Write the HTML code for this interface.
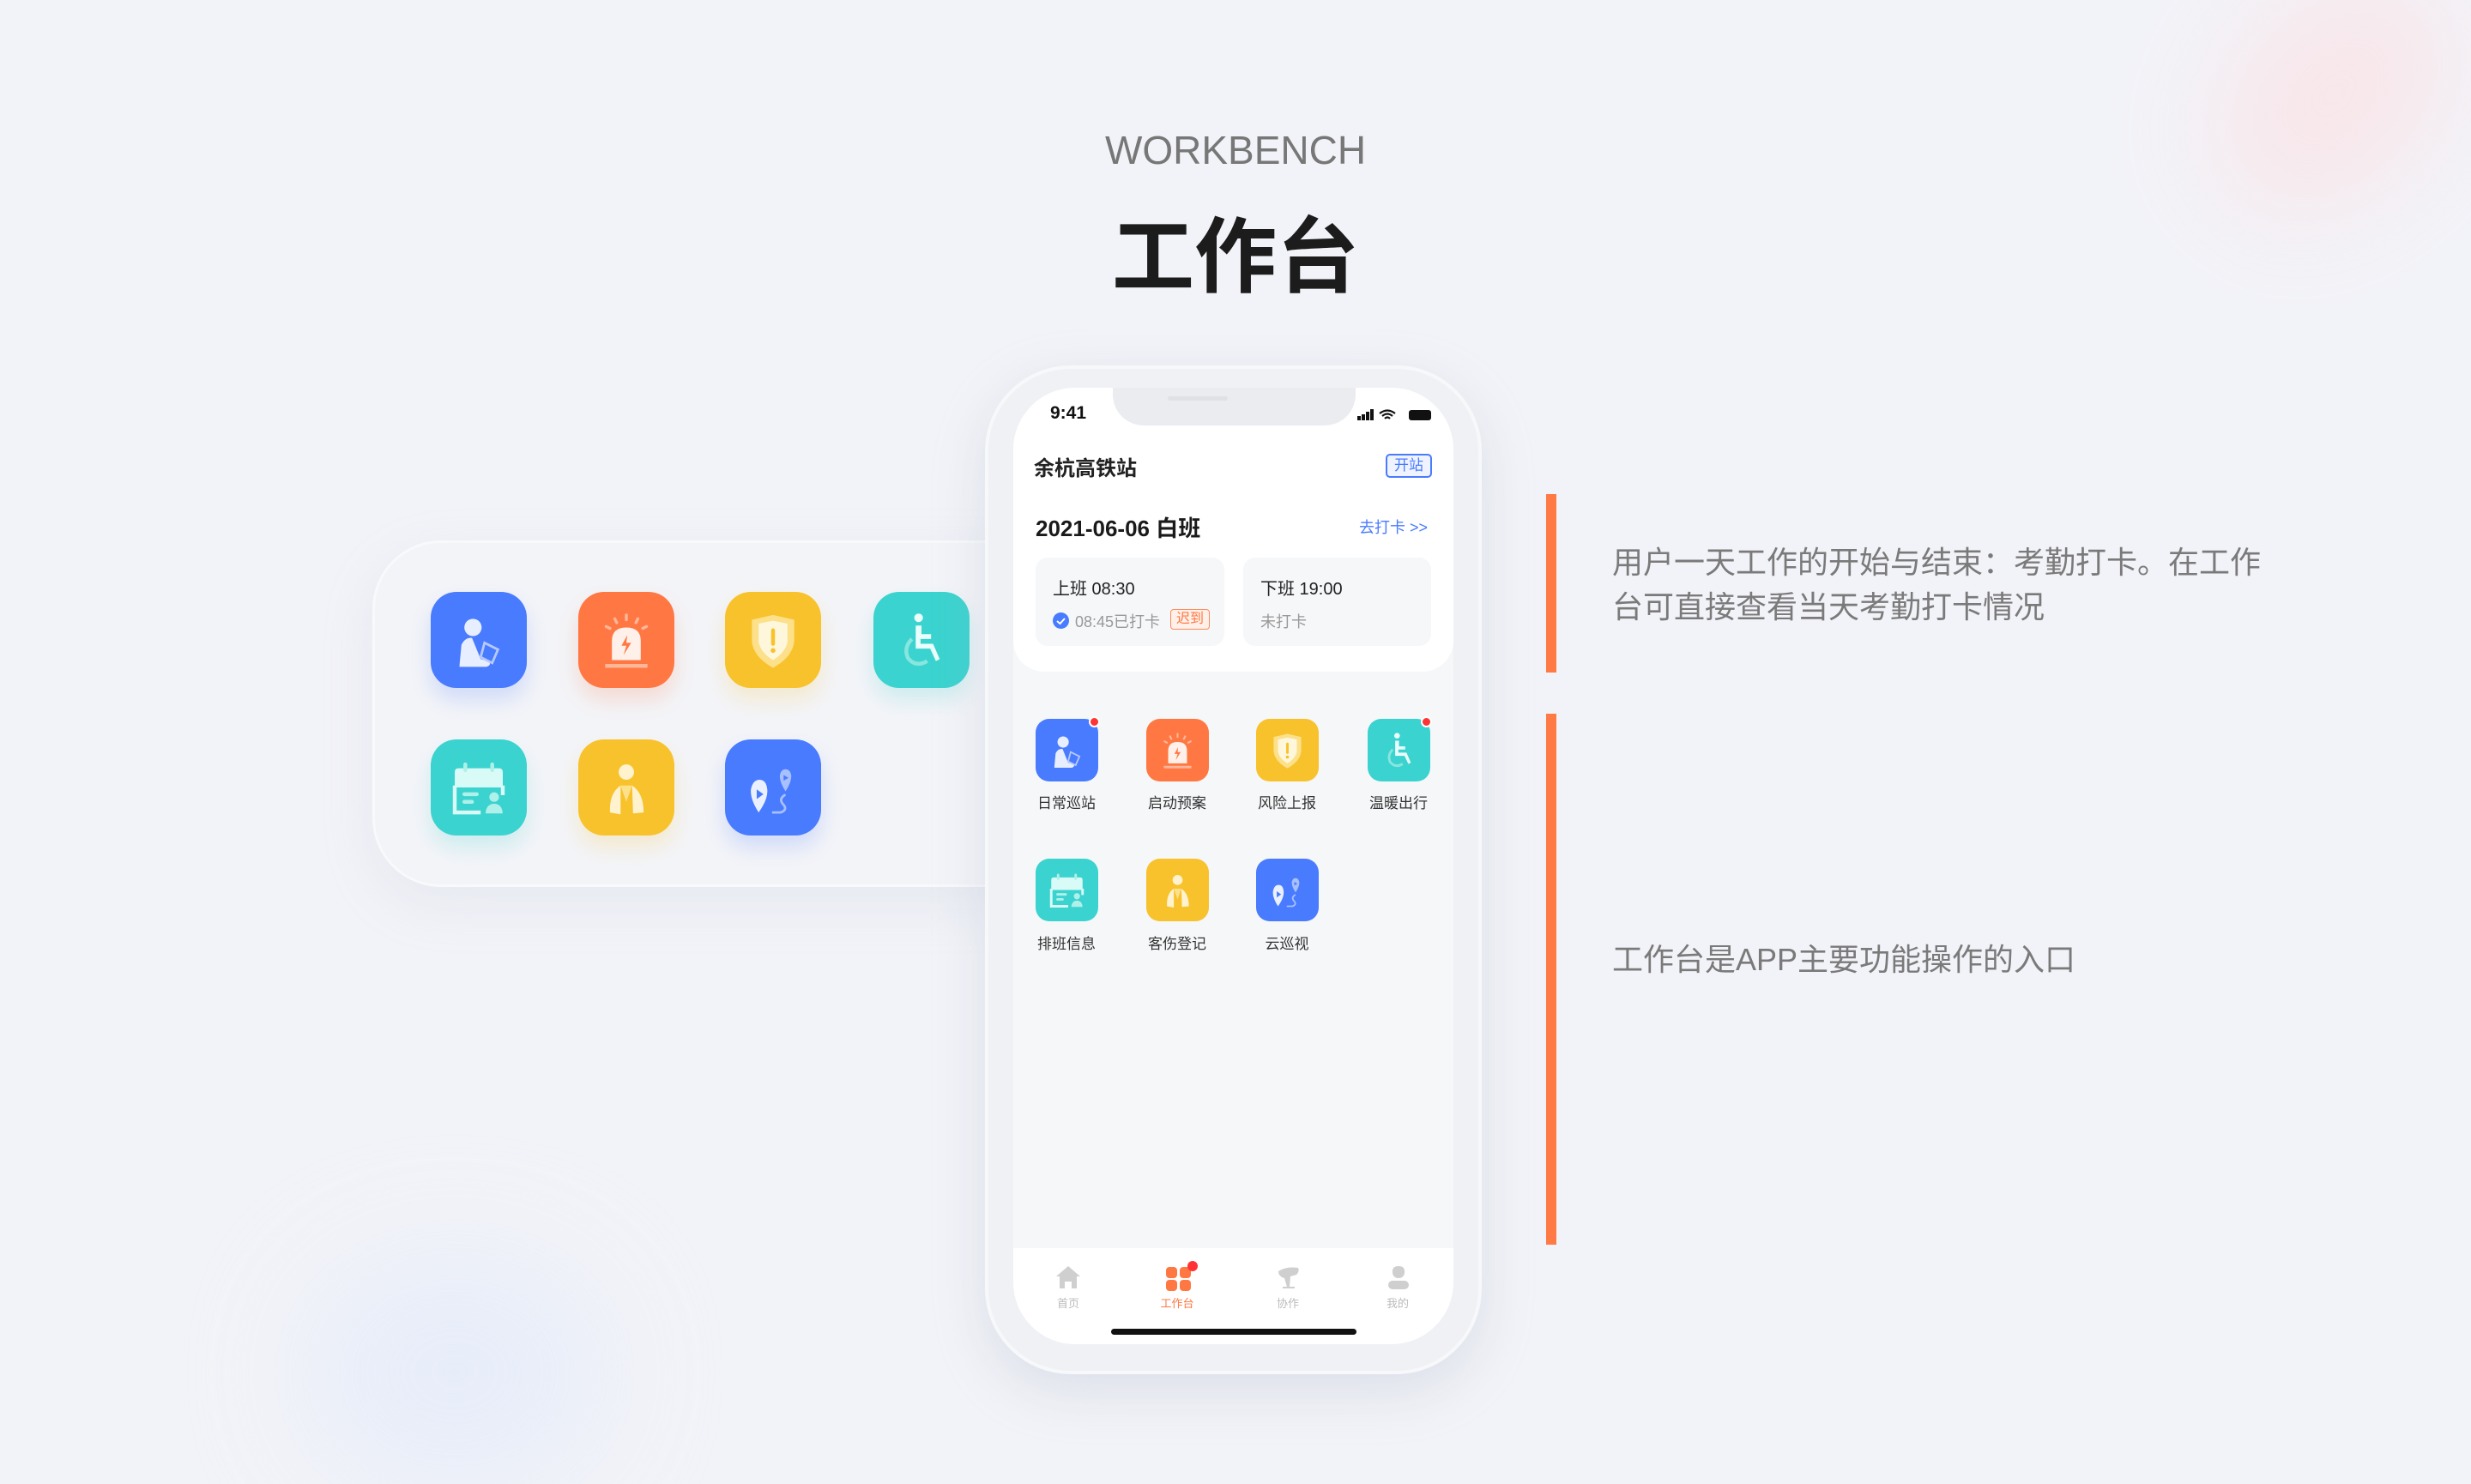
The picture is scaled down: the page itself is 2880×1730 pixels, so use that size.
<!DOCTYPE html>
<html><head><meta charset="utf-8">
<style>
*{margin:0;padding:0;box-sizing:border-box}
body{width:2880px;height:1686px;background:#f2f3f8;position:relative;overflow:hidden;font-family:"Liberation Sans","Noto Sans CJK SC",sans-serif}
.abs{position:absolute}
.blob1{left:2560px;top:0px;width:320px;height:220px;border-radius:50%;background:#fbe1e4;filter:blur(60px);transform:rotate(-45deg);opacity:.7}
.blob2{left:360px;top:1470px;width:340px;height:260px;border-radius:50%;background:#e4ebfa;filter:blur(70px);opacity:.8}
.en{left:0;width:2880px;top:148px;text-align:center;font-size:46px;color:#777;letter-spacing:0px}
.cn{left:0;width:2880px;top:222px;text-align:center;font-size:96px;font-weight:bold;color:#1c1c1c;letter-spacing:0px}
.card{left:434px;top:630px;width:800px;height:404px;border-radius:80px;background:#f3f4f8;border:3px solid #f8f9fb;box-shadow:0 20px 60px rgba(180,190,210,.18)}
.ic{position:absolute;border-radius:30px}
.bar{left:1802px;width:12px;background:#ff7a45}
.txt{left:1879px;font-size:36px;color:#7a7a7a;line-height:52px}
.phone{left:1148px;top:426px;width:579px;height:1176px;border-radius:100px;background:#f0f1f5;box-shadow:0 20px 60px rgba(170,180,200,.3);border:4px solid #f7f8fa}
.screen{left:1181px;top:452px;width:513px;height:1115px;border-radius:72px;background:#f6f7f9;overflow:hidden}
.top{left:0;top:0;width:513px;height:331px;background:#fff;border-radius:0 0 36px 36px}
.notch{left:116px;top:0;width:283px;height:44px;background:#eaecf0;border-radius:0 0 36px 36px}
.lab{font-size:17px;color:#333;text-align:center;width:90px}
.tab{left:0;top:1003px;width:513px;height:112px;background:#fff}
.tl{font-size:13px;color:#bbb;text-align:center;width:80px}
</style></head><body>
<svg width="0" height="0" style="position:absolute">
<defs>
<symbol id="i1" viewBox="0 0 100 100"><circle cx="44" cy="37" r="9" fill="#e7eeff"/><path d="M30 76 L32 55 Q36 47 43 48 L52 70 L60 72 Q64 76 58 78 L30 78Z" fill="#e7eeff"/><path d="M56 53 L70 60 L64 74 L52 68Z" fill="none" stroke="#b6c9ff" stroke-width="2.5"/></symbol>
<symbol id="i2" viewBox="0 0 100 100"><path d="M35 71 L35 51 Q35 37 50 37 Q65 37 65 51 L65 71Z" fill="#fff1ea"/><rect x="28" y="75" width="44" height="4" fill="#ffb79a"/><path d="M51 45 L45 56 L50 56 L47 66 L55 53 L50 53Z" fill="#ff7843"/><g stroke="#ffb79a" stroke-width="3" stroke-linecap="round"><path d="M50 24v5M38 28l2 4M62 28l-2 4M29 36l4 2M71 36l-4 2"/></g></symbol>
<symbol id="i3" viewBox="0 0 100 100"><path d="M50 24 L72 29 L72 52 Q70 68 50 79 Q30 68 28 52 L28 29Z" fill="#fde08a"/><path d="M50 30 L65 33 L65 52 Q63 63 50 71 Q37 63 35 52 L35 33Z" fill="#fff7dc"/><rect x="48" y="38" width="4" height="18" rx="2" fill="#f8c22c"/><circle cx="50" cy="61" r="2.5" fill="#f8c22c"/></symbol>
<symbol id="i4" viewBox="0 0 100 100"><circle cx="47" cy="27" r="4.5" fill="#eafffc"/><path d="M44 35 L50 35 L50 44 L60 44 L60 49 L49 49 L49 54 L62 54 L69 70 L65 72 L59 59 L44 59Z" fill="#eafffc"/><path d="M40 49 Q31 58 36 69 Q44 79 56 72" fill="none" stroke="#87e6de" stroke-width="4"/></symbol>
<symbol id="i5" viewBox="0 0 100 100"><path d="M25 34 Q25 30 29 30 L71 30 Q75 30 75 34 L75 50 L25 50Z" fill="#d8fbf7"/><path d="M25 48 L25 76 L52 76 M75 48 L75 58" fill="none" stroke="#d8fbf7" stroke-width="4"/><rect x="34" y="24" width="4" height="10" rx="2" fill="#aef0ea"/><rect x="62" y="24" width="4" height="10" rx="2" fill="#aef0ea"/><rect x="33" y="55" width="17" height="4" rx="2" fill="#aef0ea"/><rect x="33" y="63" width="12" height="4" rx="2" fill="#aef0ea"/><circle cx="66" cy="60" r="5" fill="#aef0ea"/><path d="M57 77 Q58 67 66 67 Q74 67 75 77Z" fill="#aef0ea"/></symbol>
<symbol id="i6" viewBox="0 0 100 100"><circle cx="50" cy="34" r="8" fill="#fff3cf"/><path d="M33 76 Q32 56 44 48 L44 78Z M56 48 Q68 56 68 76 L57 77Z" fill="#fff3cf"/><path d="M44 48 L56 48 L50 65Z" fill="#fde08a"/></symbol>
<symbol id="i7" viewBox="0 0 100 100"><path d="M35 76 Q26 62 27 52 Q29 42 36 42 Q43 42 44 52 Q45 62 35 76Z" fill="#eaf0ff"/><path d="M33 52 L33 62 L40 57Z" fill="#497bff"/><path d="M63 54 Q57 45 57 38 Q58 31 63 31 Q68 31 69 38 Q69 45 63 54Z" fill="#a8c0ff"/><path d="M61 37 L61 43 L66 40Z" fill="#497bff"/><path d="M62 58 Q56 62 60 67 Q66 73 58 76 L50 76" fill="none" stroke="#a8c0ff" stroke-width="2.5" stroke-linecap="round"/></symbol>
</defs></svg>

<div class="abs blob1"></div><div class="abs blob2"></div>
<div class="abs en">WORKBENCH</div>
<div class="abs cn">工作台</div>

<div class="abs card"></div>
<div class="abs" style="left:0;top:0">
<svg class="ic" style="left:502px;top:690px;background:#497bff;box-shadow:0 14px 24px rgba(73,123,255,.2)" width="112" height="112"><use href="#i1"/></svg>
<svg class="ic" style="left:674px;top:690px;background:#ff7843;box-shadow:0 14px 24px rgba(255,120,67,.2)" width="112" height="112"><use href="#i2"/></svg>
<svg class="ic" style="left:845px;top:690px;background:#f8c22c;box-shadow:0 14px 24px rgba(248,194,44,.2)" width="112" height="112"><use href="#i3"/></svg>
<svg class="ic" style="left:1018px;top:690px;background:#3bd3cf;box-shadow:0 14px 24px rgba(59,211,207,.2)" width="112" height="112"><use href="#i4"/></svg>
<svg class="ic" style="left:502px;top:862px;background:#3bd3cf;box-shadow:0 14px 24px rgba(59,211,207,.2)" width="112" height="112"><use href="#i5"/></svg>
<svg class="ic" style="left:674px;top:862px;background:#f8c22c;box-shadow:0 14px 24px rgba(248,194,44,.2)" width="112" height="112"><use href="#i6"/></svg>
<svg class="ic" style="left:845px;top:862px;background:#497bff;box-shadow:0 14px 24px rgba(73,123,255,.2)" width="112" height="112"><use href="#i7"/></svg>
</div>

<div class="abs bar" style="top:576px;height:208px"></div>
<div class="abs bar" style="top:832px;height:619px"></div>
<div class="abs txt" style="top:630px">用户一天工作的开始与结束：考勤打卡。在工作<br>台可直接查看当天考勤打卡情况</div>
<div class="abs txt" style="top:1093px">工作台是APP主要功能操作的入口</div>

<div class="abs phone"></div>
<div class="abs screen">
  <div class="abs top"></div>
  <div class="abs notch"></div>
  <div class="abs" style="left:180px;top:10px;width:70px;height:5px;border-radius:3px;background:#dfe1e5"></div>
  <div class="abs" style="left:43px;top:18px;font-size:21px;font-weight:bold;color:#111">9:41</div>
  <div class="abs" style="left:401px;top:25px;width:90px;height:14px">
    <div class="abs" style="left:0;top:8px;width:4px;height:5px;background:#111"></div>
    <div class="abs" style="left:5px;top:6px;width:4px;height:7px;background:#111"></div>
    <div class="abs" style="left:10px;top:3px;width:4px;height:10px;background:#111"></div>
    <div class="abs" style="left:15px;top:0;width:4px;height:13px;background:#111"></div>
    <svg class="abs" style="left:25px;top:0" width="20" height="14" viewBox="0 0 20 14"><path d="M1 5 Q10 -2 19 5 M4 8 Q10 3 16 8 M7 11 Q10 8 13 11" fill="none" stroke="#111" stroke-width="2.2"/></svg>
    <div class="abs" style="left:60px;top:1px;width:26px;height:12px;border-radius:3px;background:#111"></div>
  </div>
  <div class="abs" style="left:24px;top:74px;font-size:24px;font-weight:bold;color:#222">余杭高铁站</div>
  <div class="abs" style="left:434px;top:77px;width:54px;height:28px;border:2px solid #497bff;border-radius:5px;background:#eef3ff;color:#497bff;font-size:17px;text-align:center;line-height:24px">开站</div>
  <div class="abs" style="left:26px;top:144px;font-size:26px;font-weight:bold;color:#1a1a1a">2021-06-06 白班</div>
  <div class="abs" style="left:403px;top:149px;font-size:18px;color:#497bff">去打卡 &gt;&gt;</div>
  <div class="abs" style="left:26px;top:198px;width:220px;height:103px;background:#f6f7f9;border-radius:14px">
    <div class="abs" style="left:20px;top:20px;font-size:20px;color:#222">上班 08:30</div>
    <div class="abs" style="left:20px;top:64px;width:19px;height:19px;border-radius:50%;background:#497bff"></div>
    <svg class="abs" style="left:20px;top:64px" width="19" height="19" viewBox="0 0 19 19"><path d="M5 10 L8.5 13 L14 7" fill="none" stroke="#fff" stroke-width="2"/></svg>
    <div class="abs" style="left:46px;top:61px;font-size:18px;color:#999">08:45已打卡</div>
    <div class="abs" style="left:157px;top:60px;width:46px;height:24px;border:1.5px solid #ff8a5c;border-radius:4px;background:#fff1ea;color:#ff7843;font-size:16px;text-align:center;line-height:21px">迟到</div>
  </div>
  <div class="abs" style="left:268px;top:198px;width:219px;height:103px;background:#f6f7f9;border-radius:14px">
    <div class="abs" style="left:20px;top:20px;font-size:20px;color:#222">下班 19:00</div>
    <div class="abs" style="left:20px;top:61px;font-size:18px;color:#999">未打卡</div>
  </div>

  <svg class="abs" style="left:26px;top:386px;border-radius:16px;background:#497bff" width="73" height="73"><use href="#i1"/></svg>
  <svg class="abs" style="left:155px;top:386px;border-radius:16px;background:#ff7843" width="73" height="73"><use href="#i2"/></svg>
  <svg class="abs" style="left:283px;top:386px;border-radius:16px;background:#f8c22c" width="73" height="73"><use href="#i3"/></svg>
  <svg class="abs" style="left:413px;top:386px;border-radius:16px;background:#3bd3cf" width="73" height="73"><use href="#i4"/></svg>
  <div class="abs" style="left:88px;top:383px;width:13px;height:13px;border-radius:50%;background:#f33;border:2px solid #fff"></div>
  <div class="abs" style="left:475px;top:383px;width:13px;height:13px;border-radius:50%;background:#f33;border:2px solid #fff"></div>
  <div class="abs lab" style="left:17px;top:470px">日常巡站</div>
  <div class="abs lab" style="left:146px;top:470px">启动预案</div>
  <div class="abs lab" style="left:274px;top:470px">风险上报</div>
  <div class="abs lab" style="left:404px;top:470px">温暖出行</div>
  <svg class="abs" style="left:26px;top:549px;border-radius:16px;background:#3bd3cf" width="73" height="73"><use href="#i5"/></svg>
  <svg class="abs" style="left:155px;top:549px;border-radius:16px;background:#f8c22c" width="73" height="73"><use href="#i6"/></svg>
  <svg class="abs" style="left:283px;top:549px;border-radius:16px;background:#497bff" width="73" height="73"><use href="#i7"/></svg>
  <div class="abs lab" style="left:17px;top:634px">排班信息</div>
  <div class="abs lab" style="left:146px;top:634px">客伤登记</div>
  <div class="abs lab" style="left:274px;top:634px">云巡视</div>

  <div class="abs tab"></div>
  <svg class="abs" style="left:49px;top:1022px" width="30" height="30" viewBox="0 0 30 30"><path d="M15 2 L29 14 L25 14 L25 28 L19 28 L19 20 L11 20 L11 28 L5 28 L5 14 L1 14Z" fill="#cfcfcf"/></svg>
  <div class="abs" style="left:178px;top:1022px;width:30px;height:30px">
    <div class="abs" style="left:0;top:3px;width:13px;height:13px;border-radius:4px;background:#ff7843"></div>
    <div class="abs" style="left:16px;top:3px;width:13px;height:13px;border-radius:4px;background:#ff7843"></div>
    <div class="abs" style="left:0;top:18px;width:13px;height:13px;border-radius:4px;background:#ff7843"></div>
    <div class="abs" style="left:16px;top:18px;width:13px;height:13px;border-radius:4px;background:#ff7843"></div>
    <div class="abs" style="left:25px;top:-4px;width:12px;height:12px;border-radius:50%;background:#f33"></div>
  </div>
  <svg class="abs" style="left:306px;top:1022px" width="30" height="30" viewBox="0 0 30 30"><path d="M3 8 Q12 2 26 4 Q28 8 24 12 L17 14 L16 26 L22 26 L22 28 L8 28 L8 26 L13 26 L10 16 Q3 14 3 8Z" fill="#cfcfcf"/></svg>
  <svg class="abs" style="left:434px;top:1022px" width="30" height="30" viewBox="0 0 30 30"><path d="M15 2 Q23 2 22 10 Q21 16 15 16 Q9 16 8 10 Q7 2 15 2Z" fill="#cfcfcf"/><rect x="3" y="19" width="24" height="10" rx="5" fill="#cfcfcf"/></svg>
  <div class="abs tl" style="left:24px;top:1057px">首页</div>
  <div class="abs tl" style="left:151px;top:1057px;color:#ff7843">工作台</div>
  <div class="abs tl" style="left:280px;top:1057px">协作</div>
  <div class="abs tl" style="left:408px;top:1057px">我的</div>
  <div class="abs" style="left:114px;top:1097px;width:286px;height:7px;border-radius:4px;background:#111"></div>
</div>
</body></html>
